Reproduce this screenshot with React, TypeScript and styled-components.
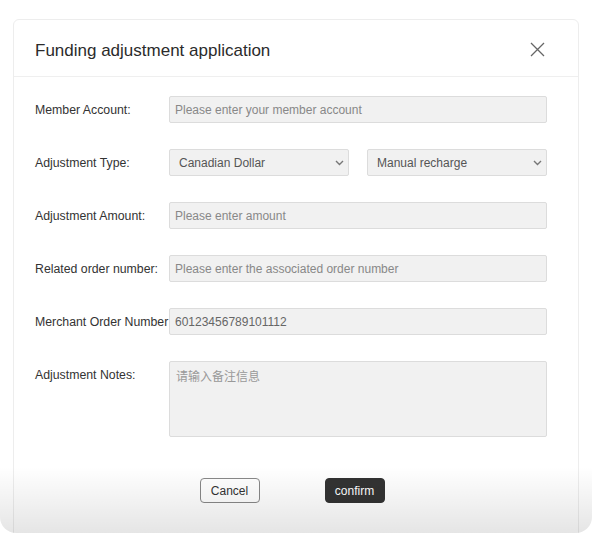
import React from "react";
import styled, { createGlobalStyle } from "styled-components";

const GlobalStyle = createGlobalStyle`
  html, body { margin: 0; padding: 0; background: #ffffff; }
  body { font-family: "Liberation Sans", Arial, "Noto Sans CJK SC", sans-serif; }
  * { box-sizing: border-box; }
`;

const Frame = styled.div`
  position: relative;
  width: 592px;
  height: 533px;
  overflow: hidden;
  border-bottom-left-radius: 16px;
  border-bottom-right-radius: 16px;
  padding: 19px 13px 0 13px;
  &::after {
    content: "";
    position: absolute;
    left: 0;
    right: 0;
    bottom: 0;
    height: 66px;
    pointer-events: none;
    background: linear-gradient(to bottom, rgba(0, 0, 0, 0), rgba(0, 0, 0, 0.1));
  }
`;

const Dialog = styled.div`
  width: 566px;
  background: #fff;
  border: 1px solid #ededed;
  border-radius: 6px;
  padding-bottom: 60px;
`;

const Header = styled.div`
  height: 57px;
  display: flex;
  align-items: center;
  justify-content: space-between;
  padding: 0 33px 0 21px;
  border-bottom: 1px solid #efefef;
`;

const Title = styled.h2`
  margin: 0;
  font-size: 17px;
  font-weight: normal;
  color: #2b2b2b;
  padding-top: 5px;
`;

const CloseButton = styled.button`
  border: none;
  background: none;
  padding: 0;
  width: 16px;
  height: 16px;
  display: flex;
  align-items: center;
  justify-content: center;
  cursor: pointer;
  margin-top: 3px;
`;

const Body = styled.div`
  display: flex;
  flex-direction: column;
  gap: 26px;
  padding: 19px 31px 0 21px;
`;

const Row = styled.div<{ $top?: boolean }>`
  display: flex;
  align-items: ${(p) => (p.$top ? "flex-start" : "center")};
`;

const Label = styled.label`
  flex: 0 0 134px;
  width: 134px;
  font-size: 12.3px;
  color: #333;
  white-space: nowrap;
  line-height: 25px;
  padding-top: 2px;
`;

const Field = styled.div`
  flex: 1;
  display: flex;
  gap: 18px;
`;

const Input = styled.input`
  width: 100%;
  height: 27px;
  background: #f1f1f1;
  border: 1px solid #dcdcdc;
  border-radius: 2px;
  padding: 0 5px;
  font-family: inherit;
  font-size: 12px;
  color: #666;
  outline: none;
  &::placeholder { color: #888; }
`;

const TextArea = styled.textarea`
  width: 100%;
  height: 76px;
  background: #f1f1f1;
  border: 1px solid #dcdcdc;
  border-radius: 2px;
  padding: 5px 6px;
  font-family: "Liberation Sans", Arial, "Noto Sans CJK SC", sans-serif;
  font-size: 12px;
  resize: none;
  outline: none;
  &::placeholder { color: #999; }
`;

const SelectWrap = styled.div`
  position: relative;
  flex: 1;
`;

const Select = styled.select`
  width: 100%;
  height: 27px;
  appearance: none;
  -webkit-appearance: none;
  background: #f1f1f1;
  border: 1px solid #dcdcdc;
  border-radius: 2px;
  padding: 0 24px 0 9px;
  font-family: inherit;
  font-size: 12px;
  color: #555;
  outline: none;
`;

const Chevron = styled.svg`
  position: absolute;
  right: 5px;
  top: 11px;
  pointer-events: none;
`;

const Footer = styled.div`
  display: flex;
  justify-content: center;
  gap: 65px;
  padding: 41px 8px 0 0;
`;

const Button = styled.button<{ $primary?: boolean }>`
  width: 60px;
  height: 25px;
  border-radius: 4px;
  font-family: inherit;
  font-size: 12px;
  cursor: pointer;
  border: 1px solid ${(p) => (p.$primary ? "#333" : "#888")};
  background: ${(p) => (p.$primary ? "#333" : "#fff")};
  color: ${(p) => (p.$primary ? "#fff" : "#333")};
`;

const ChevronIcon = () => (
  <Chevron width="9" height="6" viewBox="0 0 9 6">
    <path d="M1 1 L4.5 4.5 L8 1" fill="none" stroke="#777" strokeWidth="1.4" />
  </Chevron>
);

export default function App() {
  return (
    <>
      <GlobalStyle />
      <Frame>
        <Dialog>
          <Header>
            <Title>Funding adjustment application</Title>
            <CloseButton aria-label="close">
              <svg width="15" height="15" viewBox="0 0 15 15">
                <path d="M1 1 L14 14 M14 1 L1 14" stroke="#666" strokeWidth="1.3" />
              </svg>
            </CloseButton>
          </Header>
          <Body>
            <Row>
              <Label>Member Account:</Label>
              <Field>
                <Input placeholder="Please enter your member account" />
              </Field>
            </Row>
            <Row>
              <Label>Adjustment Type:</Label>
              <Field>
                <SelectWrap>
                  <Select defaultValue="cad">
                    <option value="cad">Canadian Dollar</option>
                  </Select>
                  <ChevronIcon />
                </SelectWrap>
                <SelectWrap>
                  <Select defaultValue="manual">
                    <option value="manual">Manual recharge</option>
                  </Select>
                  <ChevronIcon />
                </SelectWrap>
              </Field>
            </Row>
            <Row>
              <Label>Adjustment Amount:</Label>
              <Field>
                <Input placeholder="Please enter amount" />
              </Field>
            </Row>
            <Row>
              <Label>Related order number:</Label>
              <Field>
                <Input placeholder="Please enter the associated order number" />
              </Field>
            </Row>
            <Row>
              <Label>Merchant Order Number</Label>
              <Field>
                <Input defaultValue="60123456789101112" />
              </Field>
            </Row>
            <Row $top>
              <Label>Adjustment Notes:</Label>
              <Field>
                <TextArea placeholder="请输入备注信息" />
              </Field>
            </Row>
          </Body>
          <Footer>
            <Button>Cancel</Button>
            <Button $primary>confirm</Button>
          </Footer>
        </Dialog>
      </Frame>
    </>
  );
}
